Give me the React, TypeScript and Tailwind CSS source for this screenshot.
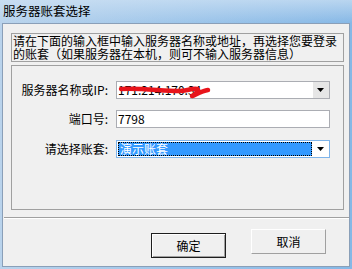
import React from "react";

function Arrow() {
  return (
    <svg width="8" height="5" viewBox="0 0 8 5">
      <path d="M0 0 H7 L3.5 4 Z" fill="#000" />
    </svg>
  );
}

export default function App() {
  return (
    <div className="w-[352px] h-[269px] flex flex-col overflow-hidden bg-linear-to-r from-[#b9d3ec] via-[#9fc6ea] to-[#86b8e6] font-['Noto_Sans_CJK_SC','Liberation_Sans',sans-serif] text-[12px] text-black">
      {/* 标题栏 */}
      <div className="h-[23px] shrink-0 pl-[3px] pt-[3px] leading-[16px] text-[12.5px] bg-linear-to-b from-[#cfe2f4]/70 to-transparent">
        服务器账套选择
      </div>

      {/* 窗体 */}
      <div className="flex-1 ml-[2px] mr-[2px] mb-[2px] border border-[#8a9fb8] bg-[#f0f0f0] flex flex-col">
        {/* 提示文字 */}
        <div className="ml-[8px] mt-[9px] w-[333px] h-[29px] border border-[#a0a0a0] leading-[13px] pl-[1px]">
          请在下面的输入框中输入服务器名称或地址，再选择您要登录
          <br />
          的账套（如果服务器在本机，则可不输入服务器信息）
        </div>

        {/* 表单区 */}
        <div className="ml-[8px] mt-[3px] w-[333px] h-[145px] border border-[#a0a0a0] flex flex-col">
          <div className="flex items-center mt-[15px] h-[18px]">
            <div className="w-[96px] text-right leading-none">服务器名称或IP:</div>
            <div className="relative ml-[8px] w-[214px] h-[18px] border border-[#abadb3] bg-white flex items-center">
              <span className="pl-[1px] flex-1 leading-none">171.214.170.34</span>
              <div className="w-[16px] h-full bg-[#e6e6e6] flex items-center justify-center">
                <Arrow />
              </div>
              <svg className="absolute left-0 top-0" width="96" height="18" viewBox="0 0 96 18">
                <path
                  d="M4 7 C25 6 45 9 62 9 C70 9 75 6 80 7 C84 8 76 14 75 14 C78 13 85 9 91 8"
                  fill="none"
                  stroke="#e8141b"
                  strokeWidth="4.5"
                  strokeLinecap="round"
                  strokeLinejoin="round"
                />
              </svg>
            </div>
          </div>

          <div className="flex items-center mt-[11px] h-[18px]">
            <div className="w-[96px] text-right leading-none">端口号:</div>
            <div className="ml-[8px] w-[214px] h-[18px] border border-[#abadb3] bg-white flex items-center">
              <span className="pl-[1px] leading-none">7798</span>
            </div>
          </div>

          <div className="flex items-center mt-[12px] h-[18px]">
            <div className="w-[96px] text-right leading-none">请选择账套:</div>
            <div className="ml-[8px] w-[214px] h-[18px] border border-[#7eb4ea] bg-white flex items-center">
              <div className="ml-[1px] flex-1 h-[14px] bg-[#3399ff] border border-dotted border-black text-white leading-[12px] pl-[1px]">
                演示账套
              </div>
              <div className="w-[17px] h-full flex items-center justify-center">
                <Arrow />
              </div>
            </div>
          </div>
        </div>

        {/* 分隔线 */}
        <div className="ml-[1px] mt-[7px] h-[2px] border-t border-[#a0a0a0] border-b border-b-white" />

        {/* 按钮 */}
        <div className="flex items-start">
          <button className="ml-[148px] mt-[14px] w-[75px] h-[25px] border border-[#1e1e1e] bg-[#f0f0f0] shadow-[inset_1px_1px_0_#fff,inset_-1px_-1px_0_#a0a0a0] leading-none">
            确定
          </button>
          <button className="ml-[25px] mt-[10px] w-[75px] h-[25px] border border-t-white border-l-white border-r-[#a0a0a0] border-b-[#a0a0a0] bg-[#f0f0f0] leading-none">
            取消
          </button>
        </div>
      </div>
    </div>
  );
}
